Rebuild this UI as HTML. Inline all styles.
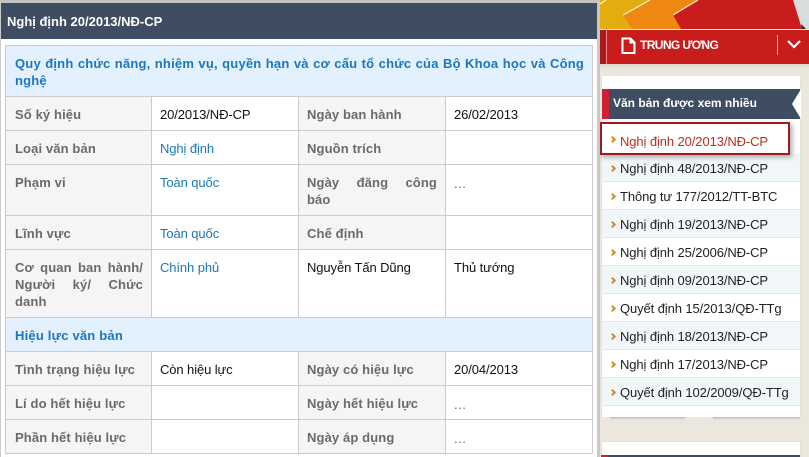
<!DOCTYPE html>
<html><head><meta charset="utf-8"><style>
*{box-sizing:border-box}
html,body{margin:0;padding:0}
body{width:809px;height:457px;overflow:hidden;position:relative;background:#ece7dd;font-family:"Liberation Sans",sans-serif;font-size:13px}
.a{position:absolute}
.t{position:absolute;white-space:nowrap;line-height:16px;font-size:13px;letter-spacing:-.1px}
.b{font-weight:bold;color:#6a6a6a;letter-spacing:.12px}
.k{color:#111}
.l{color:#1a78b8}
.h{font-weight:bold;color:#1a78c2;letter-spacing:.2px}
.r{position:absolute;left:602px;width:198px;height:28px;border-bottom:1px solid #dfe8ea;background:#fff}
.r.o{background:#f1f7f9}
.r span{position:absolute;left:18px;top:7px;font-size:13px;line-height:16px;color:#222;white-space:nowrap;letter-spacing:-.1px}
.r i,.c{position:absolute;left:8px;top:12px;width:5px;height:5px;border-top:2px solid #d78a1e;border-right:2px solid #d78a1e;transform:rotate(45deg)}
</style></head><body>
<svg class="a" style="left:597px;top:0" width="212" height="29" viewBox="0 0 212 29">
<rect width="212" height="29" fill="#c91c1c"/>
<polygon points="0,0 53,0 26,15 36,29 0,29" fill="#e3ad10"/>
<polygon points="53,0 101,0 76,15 84,29 36,29 26,15" fill="#ef8813"/>
<path d="M26 15L53 0M76 15L101 0M3 4L9 0" stroke="#fbeec8" stroke-width="1.2" fill="none"/>
<polygon points="196,0 212,0 212,29 205,29" fill="#d9dcdc"/>
<polygon points="204,24 209,29 205,29" fill="#222"/>
</svg>
<div class="a" style="left:597px;top:29px;width:212px;height:35px;background:#c91c1c;border-top:1px solid #eee"></div>
<div class="a" style="left:597px;top:30px;width:9px;height:34px;background:#a81a1a"></div>
<div class="a" style="left:606px;top:29px;width:1px;height:35px;background:#e88"></div>
<div class="a" style="left:597px;top:64px;width:212px;height:5px;background:linear-gradient(#dcd8ce,#ece7dd)"></div>
<svg class="a" style="left:621px;top:37px" width="16" height="18" viewBox="0 0 16 18"><path d="M1.5 1.5H9.5L13.5 5.5V16H1.5Z" fill="none" stroke="#fff" stroke-width="2"/><path d="M9 1.5V6H13.5" fill="#fff" stroke="#fff"/></svg>
<div class="t" style="left:640px;top:37px;color:#fff;font-weight:bold;font-size:12px;letter-spacing:-.6px">TRUNG ƯƠNG</div>
<div class="a" style="left:777px;top:35px;width:1px;height:20px;background:#eaa"></div>
<svg class="a" style="left:786px;top:39px" width="16" height="12" viewBox="0 0 16 12"><path d="M2 2L8 8L14 2" fill="none" stroke="#fff" stroke-width="2.2"/></svg>

<div class="a" style="left:601px;top:75px;width:200px;height:342px;background:#fff;border:1px solid #e4e2dc;border-bottom:0"></div>
<div class="a" style="left:602px;top:89px;width:198px;height:30px;background:#3f4d63"></div>
<div class="a" style="left:602px;top:89px;width:7px;height:30px;background:#cf2035"></div>
<svg class="a" style="left:792px;top:89px" width="9" height="30"><polygon points="9,0 9,30 0,15" fill="#fff"/></svg>
<div class="t" style="left:613px;top:95px;color:#fff;font-weight:bold;font-size:12px;letter-spacing:0">Văn bản được xem nhiều</div>

<div class="r o" style="top:154px"><i></i><span>Nghị định 48/2013/NĐ-CP</span></div>
<div class="r" style="top:182px"><i></i><span>Thông tư 177/2012/TT-BTC</span></div>
<div class="r o" style="top:210px"><i></i><span>Nghị định 19/2013/NĐ-CP</span></div>
<div class="r" style="top:238px"><i></i><span>Nghị định 25/2006/NĐ-CP</span></div>
<div class="r o" style="top:266px"><i></i><span>Nghị định 09/2013/NĐ-CP</span></div>
<div class="r" style="top:294px"><i></i><span>Quyết định 15/2013/QĐ-TTg</span></div>
<div class="r o" style="top:322px"><i></i><span>Nghị định 18/2013/NĐ-CP</span></div>
<div class="r" style="top:350px"><i></i><span>Nghị định 17/2013/NĐ-CP</span></div>
<div class="r o" style="top:378px"><i></i><span>Quyết định 102/2009/QĐ-TTg</span></div>
<div class="a" style="left:600px;top:122px;width:190px;height:33px;background:#fff;border:2px solid #9e1c1f;box-shadow:2px 2px 5px rgba(0,0,0,.35)"></div>
<div class="c" style="left:610px;top:137px"></div>
<div class="t" style="left:620px;top:134px;color:#b5311f">Nghị định 20/2013/NĐ-CP</div>
<div class="a" style="left:610px;top:417px;width:75px;height:3px;background:linear-gradient(#bbb,#ece7dd)"></div>
<div class="a" style="left:713px;top:417px;width:87px;height:3px;background:linear-gradient(#bbb,#ece7dd)"></div>
<div class="a" style="left:601px;top:441px;width:200px;height:16px;background:#fff;border:1px solid #e4e2dc"></div>
<div class="a" style="left:602px;top:455px;width:198px;height:2px;background:#3f4d63"></div>
<div class="a" style="left:601px;top:455px;width:7px;height:2px;background:#cf2035"></div>

<div class="a" style="left:0;top:0;width:600px;height:457px;background:#fff;border-right:3px solid #c9c9c5;border-left:1px solid #ccc;border-top:3px solid #c4c4c0"></div>
<div class="a" style="left:1px;top:3px;width:596px;height:36px;background:#3f4d63"></div>
<div class="t" style="left:7px;top:14px;color:#fff;font-weight:bold;letter-spacing:0">Nghị định 20/2013/NĐ-CP</div>

<svg class="a" style="left:0;top:0" width="600" height="457">
<g fill="#f5f5f5">
<rect x="5" y="96" width="146" height="221"/><rect x="5" y="351" width="146" height="102"/>
<rect x="298" y="96" width="147" height="153"/><rect x="298" y="351" width="147" height="102"/>
</g>
<rect x="5" y="45" width="588" height="51" fill="#e3f0fd"/>
<rect x="5" y="317" width="588" height="34" fill="#e3f0fd"/>
<g stroke="#ccc" stroke-width="1" shape-rendering="crispEdges">
<path d="M5.5 45V454M592.5 45V454M151.5 96V317M298.5 96V317M445.5 96V317M151.5 351V454M298.5 351V454M445.5 351V454"/>
<path d="M5 45.5H593M5 96.5H593M5 130.5H593M5 164.5H593M5 215.5H593M5 249.5H593M5 317.5H593M5 351.5H593M5 385.5H593M5 419.5H593M5 453.5H593"/>
</g></svg>

<div class="t h" style="left:15px;top:56px;width:569px;text-align:justify;text-align-last:justify">Quy định chức năng, nhiệm vụ, quyền hạn và cơ cấu tổ chức của Bộ Khoa học và Công</div>
<div class="t h" style="left:15px;top:73px">nghệ</div>

<div class="t b" style="left:15px;top:107px">Số ký hiệu</div><div class="t k" style="left:160px;top:107px">20/2013/NĐ-CP</div>
<div class="t b" style="left:307px;top:107px">Ngày ban hành</div><div class="t k" style="left:454px;top:107px">26/02/2013</div>

<div class="t b" style="left:15px;top:141px">Loại văn bản</div><div class="t l" style="left:160px;top:141px">Nghị định</div>
<div class="t b" style="left:307px;top:141px">Nguồn trích</div>

<div class="t b" style="left:15px;top:175px">Phạm vi</div><div class="t l" style="left:160px;top:175px">Toàn quốc</div>
<div class="t b" style="left:307px;top:175px;width:130px;text-align:justify;text-align-last:justify">Ngày đăng công</div>
<div class="t b" style="left:307px;top:192px">báo</div><div class="t" style="left:454px;top:176px;color:#666;letter-spacing:.5px">...</div>

<div class="t b" style="left:15px;top:226px">Lĩnh vực</div><div class="t l" style="left:160px;top:226px">Toàn quốc</div>
<div class="t b" style="left:307px;top:226px">Chế định</div>

<div class="t b" style="left:15px;top:260px;width:128px;text-align:justify;text-align-last:justify">Cơ quan ban hành/</div>
<div class="t b" style="left:15px;top:277px;width:128px;text-align:justify;text-align-last:justify">Người ký/ Chức</div>
<div class="t b" style="left:15px;top:294px">danh</div>
<div class="t l" style="left:160px;top:260px">Chính phủ</div>
<div class="t k" style="left:307px;top:260px">Nguyễn Tấn Dũng</div>
<div class="t k" style="left:454px;top:260px">Thủ tướng</div>

<div class="t h" style="left:15px;top:328px">Hiệu lực văn bản</div>

<div class="t b" style="left:15px;top:362px">Tình trạng hiệu lực</div><div class="t k" style="left:160px;top:362px">Còn hiệu lực</div>
<div class="t b" style="left:307px;top:362px">Ngày có hiệu lực</div><div class="t k" style="left:454px;top:362px">20/04/2013</div>

<div class="t b" style="left:15px;top:396px">Lí do hết hiệu lực</div>
<div class="t b" style="left:307px;top:396px">Ngày hết hiệu lực</div><div class="t" style="left:454px;top:397px;color:#666;letter-spacing:.5px">...</div>

<div class="t b" style="left:15px;top:430px">Phần hết hiệu lực</div>
<div class="t b" style="left:307px;top:430px">Ngày áp dụng</div><div class="t" style="left:454px;top:431px;color:#666;letter-spacing:.5px">...</div>
</body></html>
